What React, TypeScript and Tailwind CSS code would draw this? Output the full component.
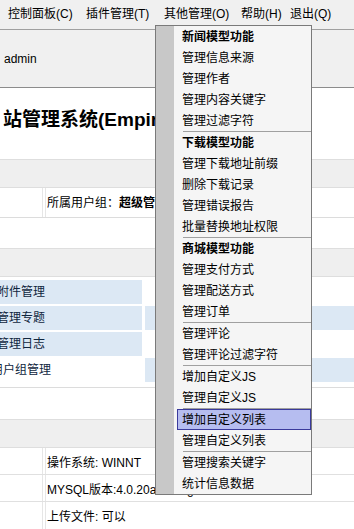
const font = "font-['Liberation_Sans','Noto_Sans_CJK_SC',sans-serif]";

type MenuEntry =
  | { kind: 'item'; label: string; bold?: boolean; active?: boolean }
  | { kind: 'sep' };

const menu: MenuEntry[] = [
  { kind: 'item', label: '新闻模型功能', bold: true },
  { kind: 'item', label: '管理信息来源' },
  { kind: 'item', label: '管理作者' },
  { kind: 'item', label: '管理内容关键字' },
  { kind: 'item', label: '管理过滤字符' },
  { kind: 'sep' },
  { kind: 'item', label: '下载模型功能', bold: true },
  { kind: 'item', label: '管理下载地址前缀' },
  { kind: 'item', label: '删除下载记录' },
  { kind: 'item', label: '管理错误报告' },
  { kind: 'item', label: '批量替换地址权限' },
  { kind: 'sep' },
  { kind: 'item', label: '商城模型功能', bold: true },
  { kind: 'item', label: '管理支付方式' },
  { kind: 'item', label: '管理配送方式' },
  { kind: 'item', label: '管理订单' },
  { kind: 'sep' },
  { kind: 'item', label: '管理评论' },
  { kind: 'item', label: '管理评论过滤字符' },
  { kind: 'sep' },
  { kind: 'item', label: '增加自定义JS' },
  { kind: 'item', label: '管理自定义JS' },
  { kind: 'sep' },
  { kind: 'item', label: '增加自定义列表', active: true },
  { kind: 'item', label: '管理自定义列表' },
  { kind: 'sep' },
  { kind: 'item', label: '管理搜索关键字' },
  { kind: 'item', label: '统计信息数据' },
];

const topMenu = [
  { label: '控制面板(C)', w: 'w-[78px]' },
  { label: '插件管理(T)', w: 'w-[78px]' },
  { label: '其他管理(O)', w: 'w-[77px]' },
  { label: '帮助(H)', w: 'w-[49px]' },
  { label: '退出(Q)', w: 'w-[50px]' },
];

const shortcuts = [
  { left: '附件管理', leftBlue: true, rightBlue: false },
  { left: '管理专题', leftBlue: true, rightBlue: true },
  { left: '管理日志', leftBlue: true, rightBlue: false },
  { left: '用户组管理', leftBlue: false, rightBlue: true },
];

function Band() {
  return <div className="h-[29px] border-y border-[#dedede] bg-[#efefef]" />;
}

function InfoRow({ children, last }: { children: React.ReactNode; last?: boolean }) {
  return (
    <div className={`flex h-[27px] ${last ? '' : 'border-b border-[#e0e0e0]'}`}>
      <div className="w-[43px] border-r border-[#e6e6e6]" />
      <div className="ml-[2px] flex flex-1 items-center border-l border-[#e6e6e6] pl-[1px] pt-[3px]">
        {children}
      </div>
    </div>
  );
}

function DropMenu() {
  return (
    <div className="absolute left-[155px] top-[25px] flex w-[157px] border border-[#7a7a7a] bg-[#f5f5f5]">
      <div className="w-[18px] bg-[#c8c8c8]" />
      <div className="flex-1">
        {menu.map((m, i) =>
          m.kind === 'sep' ? (
            <div key={i} className="ml-[9px] h-px bg-[#a0a0a0]" />
          ) : (
            <div
              key={i}
              className={`flex h-[21px] items-center whitespace-nowrap ${
                m.active
                  ? 'ml-[3px] border border-[#3a3a9c] bg-[#b6bdf0] pl-[4px]'
                  : 'pl-[8px]'
              } ${m.bold ? 'font-bold' : ''}`}
            >
              {m.label}
            </div>
          ),
        )}
      </div>
    </div>
  );
}

export default function App() {
  return (
    <div className={`relative h-[529px] w-[354px] overflow-hidden bg-white text-[12px] text-black ${font}`}>
      <div className="flex h-[29px] items-center bg-[#f0f0f0] pl-[8px] pb-[1px]">
        {topMenu.map((t) => (
          <span key={t.label} className={`${t.w} shrink-0 whitespace-nowrap`}>
            {t.label}
          </span>
        ))}
      </div>

      <div className="flex h-[59px] items-center border-y border-t-[#a0a0a0] border-b-[#8c8c8c] bg-[#f0f0f0] pl-[4px]">
        admin
      </div>

      <div className="h-[71px] overflow-hidden pl-[3px] pt-[20px]">
        <div className="whitespace-nowrap text-[19px] font-bold leading-[24px]">
          站管理系统(EmpireCMS)
        </div>
      </div>

      <Band />
      <div className="flex h-[30px] border-b border-[#dcdcdc]">
        <div className="w-[43px] border-r border-[#e6e6e6]" />
        <div className="ml-[2px] flex flex-1 items-center whitespace-nowrap border-l border-[#e6e6e6] pl-[1px]">
          所属用户组：<b>超级管理员</b>
        </div>
      </div>

      <div className="h-[30px]" />
      <Band />
      <div className="flex flex-col gap-[2px] border-b border-[#dcdcdc] pb-[5px] pt-[3px]">
        {shortcuts.map((s) => (
          <div key={s.left} className="flex h-[24px] gap-[3px]">
            <div
              className={`w-[142px] overflow-hidden ${s.leftBlue ? 'bg-[#dce8f4]' : 'bg-white'}`}
            >
              <div className="-ml-[100px] w-[242px] whitespace-nowrap text-center leading-[24px] text-[#10263e]">
                {s.left}
              </div>
            </div>
            <div className={`flex-1 ${s.rightBlue ? 'bg-[#dce8f4]' : 'bg-white'}`} />
          </div>
        ))}
      </div>

      <div className="h-[31px]" />
      <Band />
      <InfoRow>操作系统: WINNT</InfoRow>
      <InfoRow>MYSQL版本:4.0.20a-debug</InfoRow>
      <InfoRow last>上传文件: 可以</InfoRow>

      <DropMenu />
    </div>
  );
}
